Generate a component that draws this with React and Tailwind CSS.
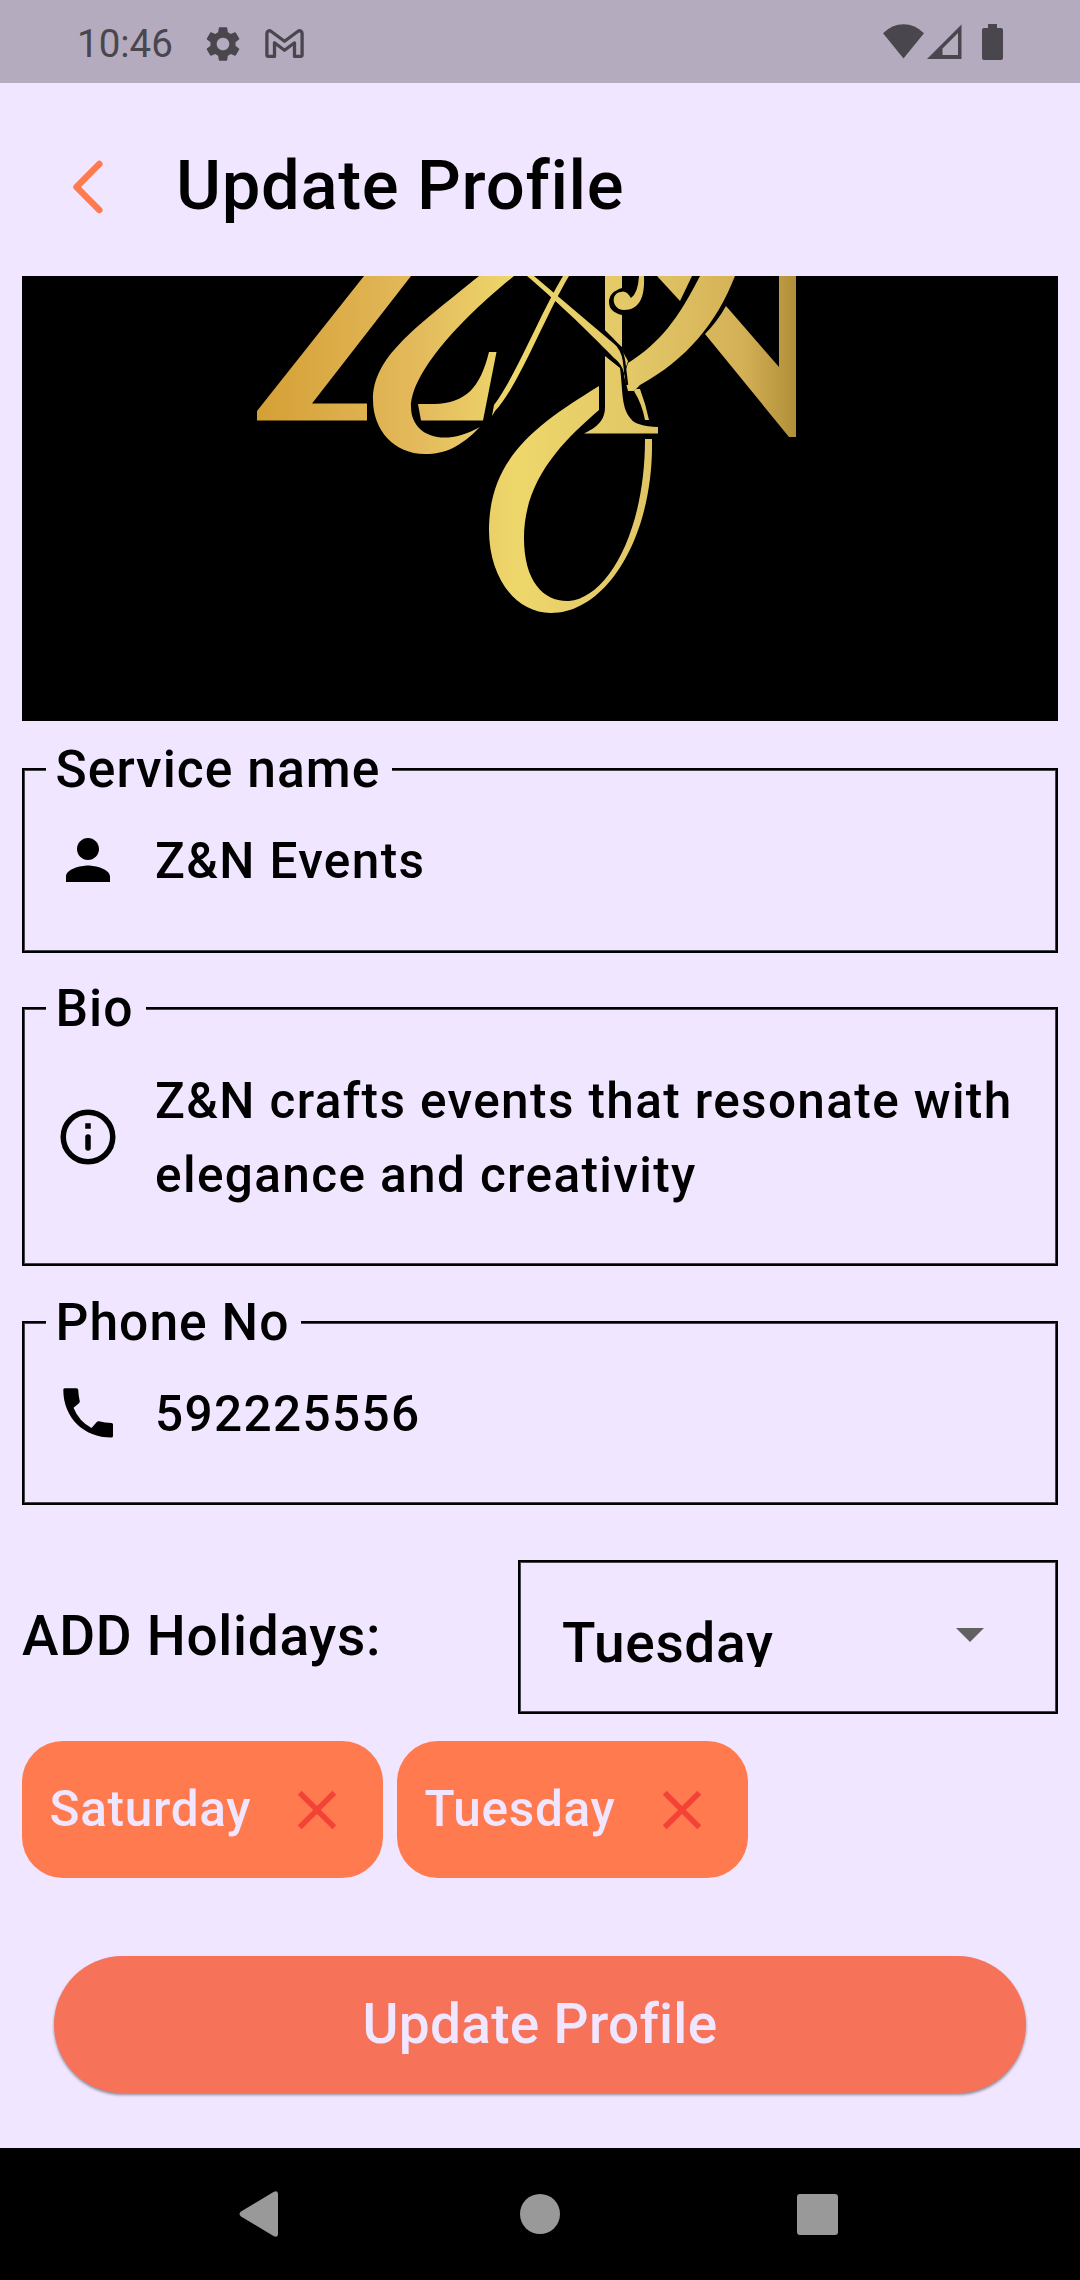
import React from "react";
import { MdSettings, MdPerson } from "react-icons/md";

function StatusBar() {
  return (
    <div className="flex h-[83px] items-center justify-between bg-[#b5abbf] pl-[77px] pr-[77px] text-[#4a464d]">
      <div className="flex items-center pt-1">
        <span className="mt-[2px] w-[98px] whitespace-nowrap text-[38.500px] leading-none">10:46</span>
        <MdSettings className="ml-[27px] size-[42px]" />
        <svg className="ml-[21px] h-[30px] w-[39px]" viewBox="0 0 39 30" fill="none" stroke="currentColor" strokeWidth="3.300">
          <path d="M1.900 4.600C1.900 1.800 4.200 1 6.300 2.500L19.500 12.300 32.700 2.500C34.800 1 37.100 1.800 37.100 4.600V26Q37.100 27.400 35.700 27.400H29.500V13.800L19.500 21.300 9.500 13.800V27.400H3.300Q1.900 27.400 1.900 26Z" strokeLinejoin="round" />
        </svg>
      </div>
      <div className="flex items-start">
        <svg className="h-[36px] w-[41px]" viewBox="0 0 41 36" fill="currentColor">
          <path d="M0 9.3Q9 .3 20.5.3T41 9.3L20.5 34.5Z" />
        </svg>
        <svg className="ml-[3px] h-[36px] w-[35px]" viewBox="0 0 35 36" fill="currentColor" fillRule="evenodd">
          <path d="M0 35 34.5.5V35ZM15.5 24.5V31H31V9Z" />
        </svg>
        <svg className="ml-[20px] h-[36px] w-[21px]" viewBox="0 0 21 36" fill="currentColor">
          <path d="M6 0h9v4h4q2 0 2 2v28q0 2-2 2H2q-2 0-2-2V6q0-2 2-2h4Z" />
        </svg>
      </div>
    </div>
  );
}

function Emblem() {
  return (
    <svg className="block h-[445px] w-full" viewBox="22 276 1036 445">
      <defs>
        <linearGradient id="gold" gradientUnits="userSpaceOnUse" x1="256" y1="400" x2="797" y2="400">
          <stop offset="0" stopColor="#d59f35" />
          <stop offset=".3" stopColor="#e3ba5c" />
          <stop offset=".48" stopColor="#eed76b" />
          <stop offset=".7" stopColor="#e2c867" />
          <stop offset=".9" stopColor="#d4b056" />
          <stop offset="1" stopColor="#b08f38" />
        </linearGradient>
      </defs>
      <g fill="url(#gold)">
        <path d="M364 276H411L312 403.500H367V420.500H257V411Z" />
        <path d="M418 404H434C466 403 480 388 489 352H496.500L483 420.500H421Z" />
        <path d="M479 276H514C463 317 411 372 411 407C411 434 441 449 480 427C460 447 446 454 425 454C394 454 373 430 373 400C373 358 411 331 479 276Z" />
        <path d="M563 276H569C547 312 517 389 495 411L492 416L494 405C517 374 540 314 563 276Z" />
        <path d="M527 276H534L619 348Q625 354 628 361L624 373Q622 364 613 357C587 330 552 297 527 276Z" />
        <path d="M605 276H622V288Q609 292 609 302Q609 312 622 315V347L605 332Z" />
        <path d="M605 356L620 368C623 390 621 408 631 419Q636 426 658 427V433.500H584C595 428 605 422 605 407Z" />
        <path d="M639 276H644C645 298 639 310 624 310C612 310 610 293 621 292Q626 290 631 298Q638 293 639 276Z" />
        <path d="M700 276H735C716 324 687 359 640 385L634 391H628L624 376L628 363C660 343 678 319 700 276Z" />
        <path d="M657 276H692L680 301Z" />
        <path d="M726 306L779 367V276H796V437H789L705 334Q717 322 726 306Z" />
        <path d="M599 386V410C562 442 524 480 524 538C524 582 544 602 569 601C607 598 645 533 645 439H652C654 536 607 613 551 613C515 613 489 577 489 530C489 457 539 423 599 386Z" />
        <path d="M636 389H640Q646 405 649 420H645Q642 404 634 391Z" />
      </g>
      {/* dark gaps where one stroke passes over another */}
      <path d="M600 327L613 340Q623 350 624 361L627 385" fill="none" stroke="#000" strokeWidth="2.500" />
    </svg>
  );
}

function InfoIcon() {
  return (
    <svg className="-mt-[2px] size-[66px]" viewBox="0 0 24 24">
      <circle cx="12" cy="12" r="9" fill="none" stroke="currentColor" strokeWidth="2" />
      <rect x="11" y="11" width="2" height="6" rx="1" />
      <rect x="11" y="7" width="2" height="2" />
    </svg>
  );
}

function PhoneIcon() {
  return (
    <svg className="-mt-[2px] size-[66px]" viewBox="0 0 66 66">
      <path d="M9.700 8.300H21.500Q23 8.300 23.200 9.800Q23.500 16 24.800 21.200Q24.900 22.300 24 23.200L18.500 27.800Q24 41.500 36.500 48L41.800 42Q42.600 41.100 44 41.300Q50 43 56.500 43Q58 43.300 58 44.500V56Q58 57.600 56.300 57.600C29 57.600 8.300 38 8.300 9.800Q8.300 8.300 9.700 8.300Z" />
    </svg>
  );
}

function Field({ label, icon, children, className }) {
  return (
    <div className={"relative flex items-center border-2 border-black pl-[31px] pt-[54px] pb-[52px] shadow-[inset_0_0_0_1px_rgba(0,0,0,0.7)] " + className}>
      <span className="absolute left-[21.500px] -top-[30px] whitespace-nowrap bg-[#f0e6ff] pl-[10px] pr-[12px] text-[51.560px] leading-[60px] tracking-[1.030px]">
        {label}
      </span>
      {icon}
      <p className="ml-[34px] whitespace-pre text-[49.500px] leading-[74px] tracking-[1.375px]">{children}</p>
    </div>
  );
}

function Chip({ children, className }) {
  return (
    <div className={"flex h-[137px] items-center justify-between rounded-[41px] bg-[#ff7a4f] pl-[27.500px] pr-[33px] text-[49.500px] leading-none tracking-[0.690px] text-[#f0e6ff] " + className}>
      <span>{children}</span>
      <svg className="size-[66px]" viewBox="0 0 24 24" fill="#f44336">
        <path d="M19 6.410 17.590 5 12 10.590 6.410 5 5 6.410 10.590 12 5 17.590 6.410 19 12 13.410 17.590 19 19 17.590 13.410 12z" />
      </svg>
    </div>
  );
}

export default function App() {
  return (
    <div className="flex h-[2280px] w-[1080px] flex-col overflow-hidden bg-[#f0e6ff] font-['Roboto',sans-serif] text-black">
      <StatusBar />
      <header className="flex h-[193px] items-center pl-[70px] pt-[12px]">
        <svg className="mt-[3px] h-[56px] w-[36px]" viewBox="0 0 36 56" fill="none" stroke="#ff7a4f" strokeWidth="6.500" strokeLinecap="round" strokeLinejoin="round">
          <path d="M29.300 5 6.500 28 29.300 51" />
        </svg>
        <h1 className="ml-[70px] mt-[2px] text-[68.750px] font-medium leading-none tracking-[0.690px]">Update Profile</h1>
      </header>
      <main className="flex flex-1 flex-col px-[22px] font-medium">
        <div className="bg-black">
          <Emblem />
        </div>
        <Field label="Service name" icon={<MdPerson className="-mt-[2px] size-[66px]" />} className="mt-[47px] h-[184.500px]">
          {"Z&N Events"}
        </Field>
        <Field label="Bio" icon={<InfoIcon />} className="mt-[54.500px] h-[259px]">
          {"Z&N crafts events that resonate with\nelegance and creativity"}
        </Field>
        <Field label="Phone No" icon={<PhoneIcon />} className="mt-[55px] h-[184px]">
          592225556
        </Field>
        <div className="mt-[55px] flex h-[154px] items-center justify-between">
          <span className="-mt-[2px] text-[55px] leading-none tracking-[0.690px]">ADD Holidays:</span>
          <div className="flex h-full w-[540px] items-start justify-between border-2 border-black pl-[42px] pr-[72px] pt-[39px] shadow-[inset_0_0_0_1px_rgba(0,0,0,0.7)]">
            <span className="block h-[66px] overflow-hidden text-[55px] leading-[84px] tracking-[0.690px]">Tuesday</span>
            <svg className="mt-[27px] h-[14px] w-[28px]" viewBox="0 0 28 14" fill="#616161">
              <path d="M0 0H28L14 14Z" />
            </svg>
          </div>
        </div>
        <div className="mt-[27px] flex gap-[14px]">
          <Chip className="w-[361px]">Saturday</Chip>
          <Chip className="w-[350.500px]">Tuesday</Chip>
        </div>
        <button className="mx-[32px] mt-[78px] h-[137px] rounded-full bg-[#f67259] text-[55px] leading-none tracking-[0.275px] text-[#f0e6ff] shadow-[0_2px_3px_rgba(0,0,0,0.4)]">
          Update Profile
        </button>
      </main>
      <nav className="flex h-[132px] items-center bg-black pl-[239px] text-[#999999]">
        <svg className="h-[46px] w-[39px]" viewBox="0 0 39 46" fill="currentColor">
          <path d="M34.500 1Q39 -1 39 3V43Q39 47 34.500 45L2 25.500Q-1 23 2 20.500Z" />
        </svg>
        <div className="ml-[242px] size-[40px] rounded-full bg-current" />
        <div className="ml-[237px] size-[41px] rounded-[3px] bg-current" />
      </nav>
    </div>
  );
}
